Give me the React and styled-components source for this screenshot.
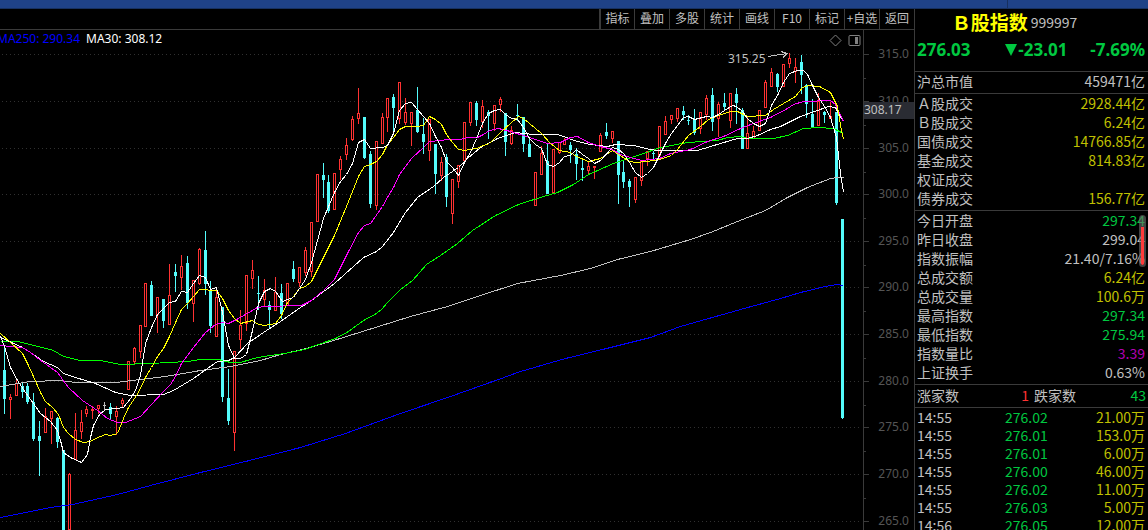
import styled, { createGlobalStyle } from 'styled-components';

const Color = {
  line: '#3a3a3a',
  text: '#c0c0c0',
  dim: '#555555',
  green: '#00c840',
  yellow: '#c0c000',
  red: '#ff3232',
  cyan: '#54fcfc',
  purple: '#b400b4',
};

const TOOLS = ['指标', '叠加', '多股', '统计', '画线', 'F10', '标记', '+自选', '返回'];

const TURNOVER = [
  ['Ａ股成交', '2928.44亿', 'yellow'],
  ['Ｂ股成交', '6.24亿', 'yellow'],
  ['国债成交', '14766.85亿', 'yellow'],
  ['基金成交', '814.83亿', 'yellow'],
  ['权证成交', '', 'yellow'],
  ['债券成交', '156.77亿', 'yellow'],
];

const DETAIL = [
  ['今日开盘', '297.34', 'green'],
  ['昨日收盘', '299.04', 'text'],
  ['指数振幅', '21.40/7.16%', 'text'],
  ['总成交额', '6.24亿', 'yellow'],
  ['总成交量', '100.6万', 'yellow'],
  ['最高指数', '297.34', 'green'],
  ['最低指数', '275.94', 'green'],
  ['指数量比', '3.39', 'purple'],
  ['上证换手', '0.63%', 'text'],
];

const TICKS = [
  ['14:55', '276.02', '21.00万'],
  ['14:55', '276.01', '153.0万'],
  ['14:55', '276.01', '6.00万'],
  ['14:55', '276.00', '46.00万'],
  ['14:55', '276.02', '11.00万'],
  ['14:55', '276.03', '5.00万'],
  ['14:56', '276.05', '12.00万'],
];

const LEVELS = [
  ['315.0', 54],
  ['310.0', 101],
  ['305.0', 148],
  ['300.0', 194],
  ['295.0', 241],
  ['290.0', 287],
  ['285.0', 334],
  ['280.0', 381],
  ['275.0', 427],
  ['270.0', 474],
  ['265.0', 521],
];

// [x, high, low, body top, body bottom, rising]
const CANDLES = [
  [4, 346, 414, 370, 399, 0], [10, 394, 419, 397, 400, 1], [16, 379, 396, 383, 396, 1],
  [22, 382, 398, 386, 392, 0], [27, 383, 404, 386, 402, 0], [33, 393, 441, 402, 439, 0],
  [39, 421, 476, 436, 441, 0], [45, 408, 433, 416, 433, 1], [51, 411, 444, 411, 419, 1],
  [57, 417, 448, 418, 442, 0], [63, 450, 540, 450, 540, 0], [69, 473, 530, 474, 530, 1],
  [75, 413, 460, 430, 460, 1], [81, 410, 439, 422, 432, 1], [86, 406, 417, 409, 414, 1],
  [92, 406, 419, 409, 411, 1], [98, 405, 414, 405, 409, 1], [110, 403, 420, 407, 414, 0],
  [116, 406, 435, 411, 417, 1], [122, 398, 408, 400, 404, 1], [128, 361, 390, 361, 390, 1],
  [134, 347, 364, 348, 362, 1], [140, 325, 358, 325, 352, 1], [145, 283, 327, 283, 327, 1],
  [151, 281, 316, 285, 316, 0], [157, 297, 333, 297, 315, 1], [163, 299, 328, 299, 321, 0],
  [169, 264, 325, 295, 325, 1], [175, 264, 292, 272, 276, 0], [181, 255, 290, 266, 278, 1],
  [187, 256, 309, 263, 303, 0], [193, 280, 322, 280, 304, 1], [199, 248, 285, 249, 284, 1],
  [205, 231, 295, 250, 284, 0], [210, 281, 333, 290, 326, 0], [216, 288, 337, 297, 337, 1],
  [222, 307, 402, 307, 397, 0], [228, 369, 425, 398, 421, 0], [234, 351, 451, 351, 433, 1],
  [240, 310, 349, 325, 340, 1], [246, 275, 331, 275, 324, 1], [252, 260, 289, 270, 279, 1],
  [258, 276, 310, 293, 294, 0], [264, 279, 306, 290, 300, 1], [269, 301, 328, 305, 310, 0],
  [275, 277, 311, 292, 311, 1], [281, 284, 319, 293, 314, 0], [287, 283, 306, 283, 306, 1],
  [293, 261, 282, 269, 279, 0], [299, 267, 287, 267, 283, 1], [305, 247, 276, 250, 273, 1],
  [311, 222, 277, 222, 272, 1], [317, 174, 222, 174, 222, 1], [323, 163, 198, 175, 180, 0],
  [328, 175, 213, 182, 211, 0], [334, 173, 210, 173, 210, 1], [340, 156, 180, 159, 170, 1],
  [346, 138, 160, 145, 155, 1], [352, 116, 141, 119, 140, 1], [358, 88, 124, 113, 119, 1],
  [364, 117, 159, 117, 158, 0], [370, 151, 208, 154, 204, 0], [376, 141, 210, 141, 206, 1],
  [382, 113, 144, 117, 144, 1], [387, 98, 132, 98, 118, 1], [393, 94, 135, 97, 108, 0],
  [399, 82, 124, 82, 119, 1], [405, 98, 125, 112, 123, 1], [411, 112, 146, 112, 124, 1],
  [417, 87, 133, 110, 132, 0], [423, 118, 154, 134, 142, 0], [429, 119, 161, 119, 151, 1],
  [435, 144, 194, 144, 174, 0], [441, 157, 181, 162, 176, 1], [446, 154, 207, 157, 197, 0],
  [452, 179, 224, 179, 214, 1], [458, 165, 188, 165, 182, 1], [464, 122, 161, 122, 161, 1],
  [470, 102, 126, 102, 123, 1], [476, 101, 126, 103, 120, 0], [482, 100, 128, 106, 122, 1],
  [488, 110, 139, 112, 116, 0], [494, 105, 131, 105, 124, 1], [500, 97, 112, 99, 105, 1],
  [505, 113, 156, 113, 142, 0], [511, 126, 145, 130, 144, 1], [517, 104, 121, 115, 116, 0],
  [523, 117, 152, 117, 144, 0], [529, 138, 157, 144, 157, 0], [535, 172, 206, 172, 206, 1],
  [541, 146, 175, 153, 175, 1], [547, 144, 194, 161, 194, 0], [553, 149, 193, 149, 193, 1],
  [559, 142, 154, 142, 153, 1], [564, 138, 145, 140, 145, 1], [570, 142, 163, 145, 150, 0],
  [576, 148, 180, 154, 164, 0], [582, 158, 181, 168, 170, 0], [588, 162, 174, 166, 171, 1],
  [594, 166, 179, 166, 168, 1], [600, 133, 152, 135, 152, 1], [606, 123, 139, 132, 136, 0],
  [612, 131, 143, 131, 139, 1], [618, 141, 204, 141, 175, 0], [623, 160, 188, 172, 182, 0],
  [629, 179, 207, 181, 187, 0], [635, 177, 203, 177, 200, 1], [641, 161, 186, 161, 181, 1],
  [647, 151, 166, 151, 159, 1], [653, 151, 161, 153, 154, 0], [659, 126, 156, 126, 156, 1],
  [665, 116, 135, 121, 135, 1], [671, 115, 124, 115, 120, 1], [677, 108, 122, 108, 119, 1],
  [683, 106, 120, 111, 115, 0], [688, 115, 125, 120, 121, 0], [694, 109, 135, 120, 133, 0],
  [700, 112, 134, 112, 129, 1], [706, 95, 120, 98, 115, 1], [712, 88, 131, 95, 122, 0],
  [718, 102, 137, 104, 119, 1], [724, 93, 111, 103, 107, 0], [730, 93, 128, 93, 121, 1],
  [736, 88, 124, 94, 103, 0], [742, 108, 149, 110, 149, 0], [747, 116, 149, 133, 149, 1],
  [753, 126, 139, 131, 139, 1], [759, 110, 131, 110, 131, 1], [765, 80, 108, 82, 108, 1],
  [771, 68, 87, 72, 87, 1], [777, 73, 92, 74, 87, 0], [783, 64, 87, 64, 87, 1],
  [789, 53, 68, 58, 64, 1], [795, 58, 83, 67, 72, 1], [801, 55, 94, 62, 75, 0],
  [806, 84, 118, 85, 104, 0], [812, 99, 128, 114, 128, 0], [818, 93, 126, 101, 126, 1],
  [824, 111, 123, 112, 115, 0], [830, 102, 119, 116, 119, 1], [836, 112, 205, 112, 203, 0],
  [842, 219, 419, 219, 418, 0],
];

const AVERAGES = [
  {
    name: 'MA250',
    color: '#0000ff',
    points:
      '0,517 50,507 72,504 117,494 150,485 200,472 249,460 300,447 345,433 400,413 450,396 498,379 520,371 565,358 602,349 650,337 680,326 740,309 780,298 800,292 825,286 836,284 843,285',
  },
  {
    name: 'MA120',
    color: '#c0c0c0',
    points:
      '0,386 18,383 30,381 60,380 75,382 115,382 140,379 165,376 200,370 230,366 260,360 280,354 302,349 330,341 362,331 410,316 447,306 480,295 517,283 560,275 590,268 617,259 650,251 690,239 710,232 742,219 765,210 787,197 807,187 830,178 837,177 843,177',
  },
  {
    name: 'MA60',
    color: '#00ff00',
    points:
      '0,341 18,341 53,350 63,356 80,360 100,360 120,364 150,363 187,361 200,359 218,359 230,362 240,362 257,357 277,354 284,353 304,349 335,338 348,331 363,320 376,313 382,308 387,302 400,289 412,280 426,264 440,255 457,243 472,230 495,215 518,204 543,196 557,192 573,184 588,174 613,163 640,154 660,147 687,142 717,140 727,137 740,136 747,138 773,138 787,135 803,128 818,127 833,128 843,133',
  },
  {
    name: 'MA30',
    color: '#ffffff',
    points:
      '0,337 22,347 30,352 43,361 57,367 63,373 75,377 95,383 115,392 130,395 163,394 173,390 193,378 207,368 217,361 228,360 234,357 247,343 263,332 280,321 300,307 311,300 334,283 363,257 376,251 382,246 393,232 405,212 417,197 433,186 443,177 458,167 467,158 480,147 497,138 515,132 533,134 557,134 577,141 590,144 607,146 615,144 633,145 650,149 657,150 697,150 720,143 737,138 747,138 757,135 770,129 780,126 800,116 817,110 828,106 835,107 838,113 843,121',
  },
  {
    name: 'MA20',
    color: '#ff00ff',
    points:
      '0,345 22,347 30,352 39,359 50,367 57,372 68,387 82,400 97,410 107,418 117,422 125,422 140,416 150,405 163,391 170,384 175,376 181,363 193,347 205,332 215,324 222,322 228,323 238,318 257,307 264,306 301,305 311,300 323,290 334,279 347,253 358,232 364,225 370,223 382,206 387,197 393,187 399,174 411,158 423,147 429,141 441,140 447,139 460,139 467,137 477,137 483,134 489,130 498,128 510,131 529,137 547,143 560,142 570,137 577,136 588,142 600,146 612,149 620,154 630,157 641,160 659,158 670,153 690,149 707,141 723,136 740,128 753,123 770,117 787,108 793,104 803,101 830,100 835,104 843,121',
  },
  {
    name: 'MA10',
    color: '#ffff00',
    points:
      '0,333 10,342 22,353 27,363 33,376 40,392 45,401 52,407 58,414 63,427 68,433 75,439 83,442 90,441 95,438 105,434 110,435 117,433 123,418 128,407 138,392 145,377 151,367 157,356 163,348 169,336 175,322 181,309 187,303 193,296 199,289 216,290 222,298 228,310 234,318 240,323 252,320 258,324 264,325 275,323 281,315 287,302 293,296 299,288 305,286 311,281 334,235 346,206 352,191 358,176 364,166 370,164 376,161 382,154 387,144 393,137 399,129 405,126 417,126 423,125 429,116 435,119 441,124 446,134 452,142 458,149 464,150 476,148 483,145 489,143 500,132 511,122 518,116 523,118 529,123 541,133 550,143 559,150 570,152 576,156 588,161 600,158 612,150 618,154 629,161 635,162 647,161 659,159 671,155 677,149 688,135 700,126 708,119 718,115 730,111 737,111 747,116 765,115 773,109 783,103 795,96 802,87 808,85 819,86 830,92 837,106 840,125 843,139',
  },
  {
    name: 'MA5',
    color: '#ffffff',
    points:
      '0,336 4,346 10,367 17,380 25,392 33,403 40,413 50,421 57,430 60,440 63,452 70,457 81,462 87,454 90,437 93,425 99,414 105,409 117,408 123,407 130,398 135,390 140,375 145,343 151,327 157,314 169,302 175,301 181,291 187,292 193,283 199,275 205,277 210,289 216,287 222,312 228,345 234,358 240,358 246,354 252,330 258,303 264,291 270,288 275,291 282,301 287,299 293,297 299,288 305,279 311,262 323,218 334,192 340,181 346,174 352,163 358,142 364,139 370,148 382,147 387,145 393,133 399,110 405,103 411,102 417,109 423,116 429,123 435,136 441,147 446,161 452,167 458,175 464,162 470,152 476,138 482,123 488,113 494,110 500,109 505,114 511,118 517,119 523,127 529,138 535,144 541,148 547,164 553,166 559,162 564,156 570,155 576,149 582,154 588,158 594,163 600,160 612,147 618,149 623,153 629,162 635,172 641,177 647,173 653,167 659,155 665,143 671,133 677,125 683,117 688,116 694,119 706,116 712,117 718,114 724,110 732,105 736,106 742,111 747,118 753,123 759,126 765,123 771,105 777,95 783,82 789,73 797,70 803,70 807,74 812,85 818,97 824,106 830,117 833,127 836,137 840,173 843,192',
  },
];

const Candle = ({ data }) => {
  const [x, high, low, top, bottom, rising] = data;
  const color = rising ? Color.red : Color.cyan;
  return (
    <g>
      <rect x={x} y={high} width="1" height={low - high} fill={color} />
      <rect x={x - 1} y={top} width="3" height={bottom - top} fill={color} />
      {rising && bottom - top > 2 ? (
        <rect x={x} y={top + 1} width="1" height={bottom - top - 2} fill="#000" />
      ) : null}
    </g>
  );
};

const Chart = () => (
  <Plot viewBox="0 50 914 480" role="img" aria-label="B股指数 K线">
    <g shapeRendering="crispEdges">
      {LEVELS.map(([label, y]) => (
        <g key={label}>
          <line x1="2" x2="862" y1={y + 0.5} y2={y + 0.5} stroke="#303030" strokeDasharray="1 3" />
          <rect x="864" y={y} width="5" height="1" fill={Color.line} />
          <rect x="864" y={y + 24} width="2" height="1" fill={Color.line} />
        </g>
      ))}
      <rect x="863" y="50" width="1" height="480" fill={Color.line} />
      {CANDLES.map((data) => (
        <Candle key={data[0]} data={data} />
      ))}
      <path d="M104.5 402V410M103 405.5H106" stroke={Color.text} />
      {AVERAGES.map(({ name, color, points }) => (
        <polyline
          key={name}
          points={points}
          transform="translate(0.5 0.5)"
          fill="none"
          stroke={color}
          strokeLinejoin="round"
        />
      ))}
      <path d="M768 56.5L787 53.5M781 51.5L787 53.5L783 57.5" fill="none" stroke={Color.text} />
    </g>
    <PlotText x="728" y="63" $color={Color.text}>
      315.25
    </PlotText>
    {LEVELS.map(([label, y]) => (
      <PlotText key={label} x="909" y={y + 4} textAnchor="end">
        {label}
      </PlotText>
    ))}
    <rect x="864" y="102" width="50" height="17" fill="#2a2c33" />
    <PlotText x="864" y="114" $color={Color.text}>
      308.17
    </PlotText>
  </Plot>
);

const DataRows = ({ rows }) => (
  <Table>
    <tbody>
      {rows.map(([label, value, color]) => (
        <tr key={label}>
          <Th scope="row">{label}</Th>
          <Td $color={Color[color]}>{value}</Td>
        </tr>
      ))}
    </tbody>
  </Table>
);

const App = () => {
  return (
    <Page>
      <GlobalStyle />
      <TitleBar>
        <TitleBarEnd />
      </TitleBar>
      <Body>
        <Main>
          <Toolbar>
            {TOOLS.map((tool) => (
              <ToolButton key={tool} type="button">
                {tool}
              </ToolButton>
            ))}
          </Toolbar>
          <ChartHeader>
            <Legend>
              <LegendItem $color="#0000ff">MA250: 290.34</LegendItem>
              <LegendItem $color="#ffffff">MA30: 308.12</LegendItem>
            </Legend>
            <IconButton type="button" aria-label="标注">
              <svg width="13" height="13" viewBox="0 0 13 13">
                <path d="M6.5 1L12 6.5L6.5 12L1 6.5Z" fill="none" stroke="#808080" />
              </svg>
            </IconButton>
            <IconButton type="button" aria-label="侧栏">
              <svg width="13" height="13" viewBox="0 0 13 13">
                <rect x="1" y="1.5" width="11" height="10" rx="1" fill="none" stroke="#808080" />
                <rect x="7" y="3" width="3" height="7" fill="#808080" />
              </svg>
            </IconButton>
          </ChartHeader>
          <Chart />
        </Main>
        <Panel>
          <Heading>
            <Name>Ｂ股指数</Name>
            <Code>999997</Code>
          </Heading>
          <Quote>
            <span>276.03</span>
            <Change>
              <svg width="12" height="12" viewBox="0 0 12 12">
                <path d="M0 0H12L6 12Z" fill={Color.green} />
              </svg>
              -23.01
            </Change>
            <span>-7.69%</span>
          </Quote>
          <Section>
            <DataRows rows={[['沪总市值', '459471亿', 'text']]} />
          </Section>
          <Section>
            <DataRows rows={TURNOVER} />
          </Section>
          <Section>
            <DataRows rows={DETAIL} />
            <ScrollThumb />
          </Section>
          <Section>
            <Breadth>
              <span>涨家数</span>
              <Count $color={Color.red}>1</Count>
              <span>跌家数</span>
              <Count $color={Color.green}>43</Count>
            </Breadth>
          </Section>
          <Section>
            <Table>
              <tbody>
                {TICKS.map(([time, price, volume], i) => (
                  <TickRow key={i}>
                    <Time scope="row">{time}</Time>
                    <Price>{price}</Price>
                    <Td $color={Color.yellow}>{volume}</Td>
                  </TickRow>
                ))}
              </tbody>
            </Table>
          </Section>
        </Panel>
      </Body>
    </Page>
  );
};

const GlobalStyle = createGlobalStyle`
  * {
    box-sizing: border-box;
  }
  body {
    margin: 0;
    background: #000;
    color: ${Color.text};
    font-family: 'Noto Sans CJK SC', sans-serif;
    font-size: 14px;
  }
`;

const Page = styled.div`
  display: flex;
  flex-direction: column;
  height: 100vh;
  overflow: hidden;
`;

const TitleBar = styled.header`
  display: flex;
  justify-content: flex-end;
  flex: none;
  height: 9px;
  background: #1f4287;
  border-bottom: 1px solid #17305f;
`;

const TitleBarEnd = styled.div`
  width: 141px;
  border-left: 1px solid #17305f;
`;

const Body = styled.div`
  display: grid;
  grid-template-columns: minmax(0, 1fr) 234px;
  flex: 1;
  min-height: 0;
`;

const Main = styled.main`
  min-width: 0;
  overflow: hidden;
`;

const Toolbar = styled.nav`
  display: flex;
  justify-content: flex-end;
  height: 21px;
  border-bottom: 1px solid ${Color.line};
`;

const ToolButton = styled.button`
  width: 35px;
  padding: 0 0 2px;
  border: none;
  border-left: 1px solid ${Color.line};
  background: none;
  color: ${Color.text};
  font-family: inherit;
  font-size: 12px;
  line-height: 18px;
  white-space: nowrap;
  cursor: pointer;
  &:first-child {
    border-left-width: 2px;
  }
  &:hover {
    color: white;
  }
`;

const ChartHeader = styled.div`
  display: flex;
  align-items: center;
  gap: 6px;
  height: 20px;
  margin-right: 50px;
  padding-right: 2px;
  border-right: 1px solid ${Color.line};
`;

const Legend = styled.div`
  display: flex;
  flex: 1;
  gap: 6px;
  margin-left: -3px;
  padding-bottom: 2px;
`;

const LegendItem = styled.span`
  color: ${(props) => props.$color};
  font-family: 'Noto Sans', sans-serif;
  font-size: 12px;
  line-height: 16px;
`;

const IconButton = styled.button`
  display: flex;
  padding: 0;
  border: none;
  background: none;
  cursor: pointer;
`;

const Plot = styled.svg`
  display: block;
  width: 100%;
  height: auto;
  overflow: visible;
`;

const PlotText = styled.text`
  fill: ${(props) => props.$color || Color.dim};
  font-family: 'Noto Sans', sans-serif;
  font-size: 12px;
`;

const Panel = styled.aside`
  border-left: 1px solid ${Color.line};
  overflow: hidden;
`;

const Heading = styled.div`
  display: flex;
  align-items: center;
  justify-content: center;
  gap: 3px;
  height: 25px;
  padding-right: 34px;
`;

const Name = styled.h1`
  margin: 0;
  color: #ffff00;
  font-size: 19px;
  font-weight: 700;
  line-height: 24px;
`;

const Code = styled.span`
  line-height: 20px;
`;

const Quote = styled.div`
  display: flex;
  align-items: center;
  justify-content: space-between;
  height: 37px;
  padding: 0 3px 6px 2px;
  color: ${Color.green};
  font-family: 'Noto Sans', sans-serif;
  font-size: 17px;
  font-weight: 700;
`;

const Change = styled.span`
  display: flex;
  align-items: center;
  gap: 1px;
  margin-left: 12px;
`;

const Section = styled.section`
  position: relative;
  padding-bottom: 2px;
  border-top: 1px solid ${Color.line};
`;

const Table = styled.table`
  width: 100%;
  border-collapse: collapse;
  line-height: 19px;
`;

const Th = styled.th`
  padding: 0 0 0 2px;
  font-weight: 400;
  text-align: left;
`;

const Time = styled(Th)`
  width: 90px;
`;

const Td = styled.td`
  padding: 0 3px 0 0;
  color: ${(props) => props.$color};
  text-align: right;
`;

const TickRow = styled.tr`
  line-height: 18px;
`;

const Price = styled.td`
  width: 60px;
  padding: 0;
  color: ${Color.green};
`;

const Breadth = styled.div`
  display: flex;
  gap: 5px;
  padding: 0 2px;
  line-height: 20px;
`;

const Count = styled.span`
  flex: 1;
  color: ${(props) => props.$color};
  text-align: right;
`;

const ScrollThumb = styled.div`
  position: absolute;
  top: 4px;
  right: 2px;
  width: 7px;
  height: 52px;
  border: 2px solid rgba(110, 110, 110, 0.6);
  border-top-width: 12px;
  border-radius: 4px;
  background: #ff3b3b;
  background-clip: padding-box;
`;

export default App;
